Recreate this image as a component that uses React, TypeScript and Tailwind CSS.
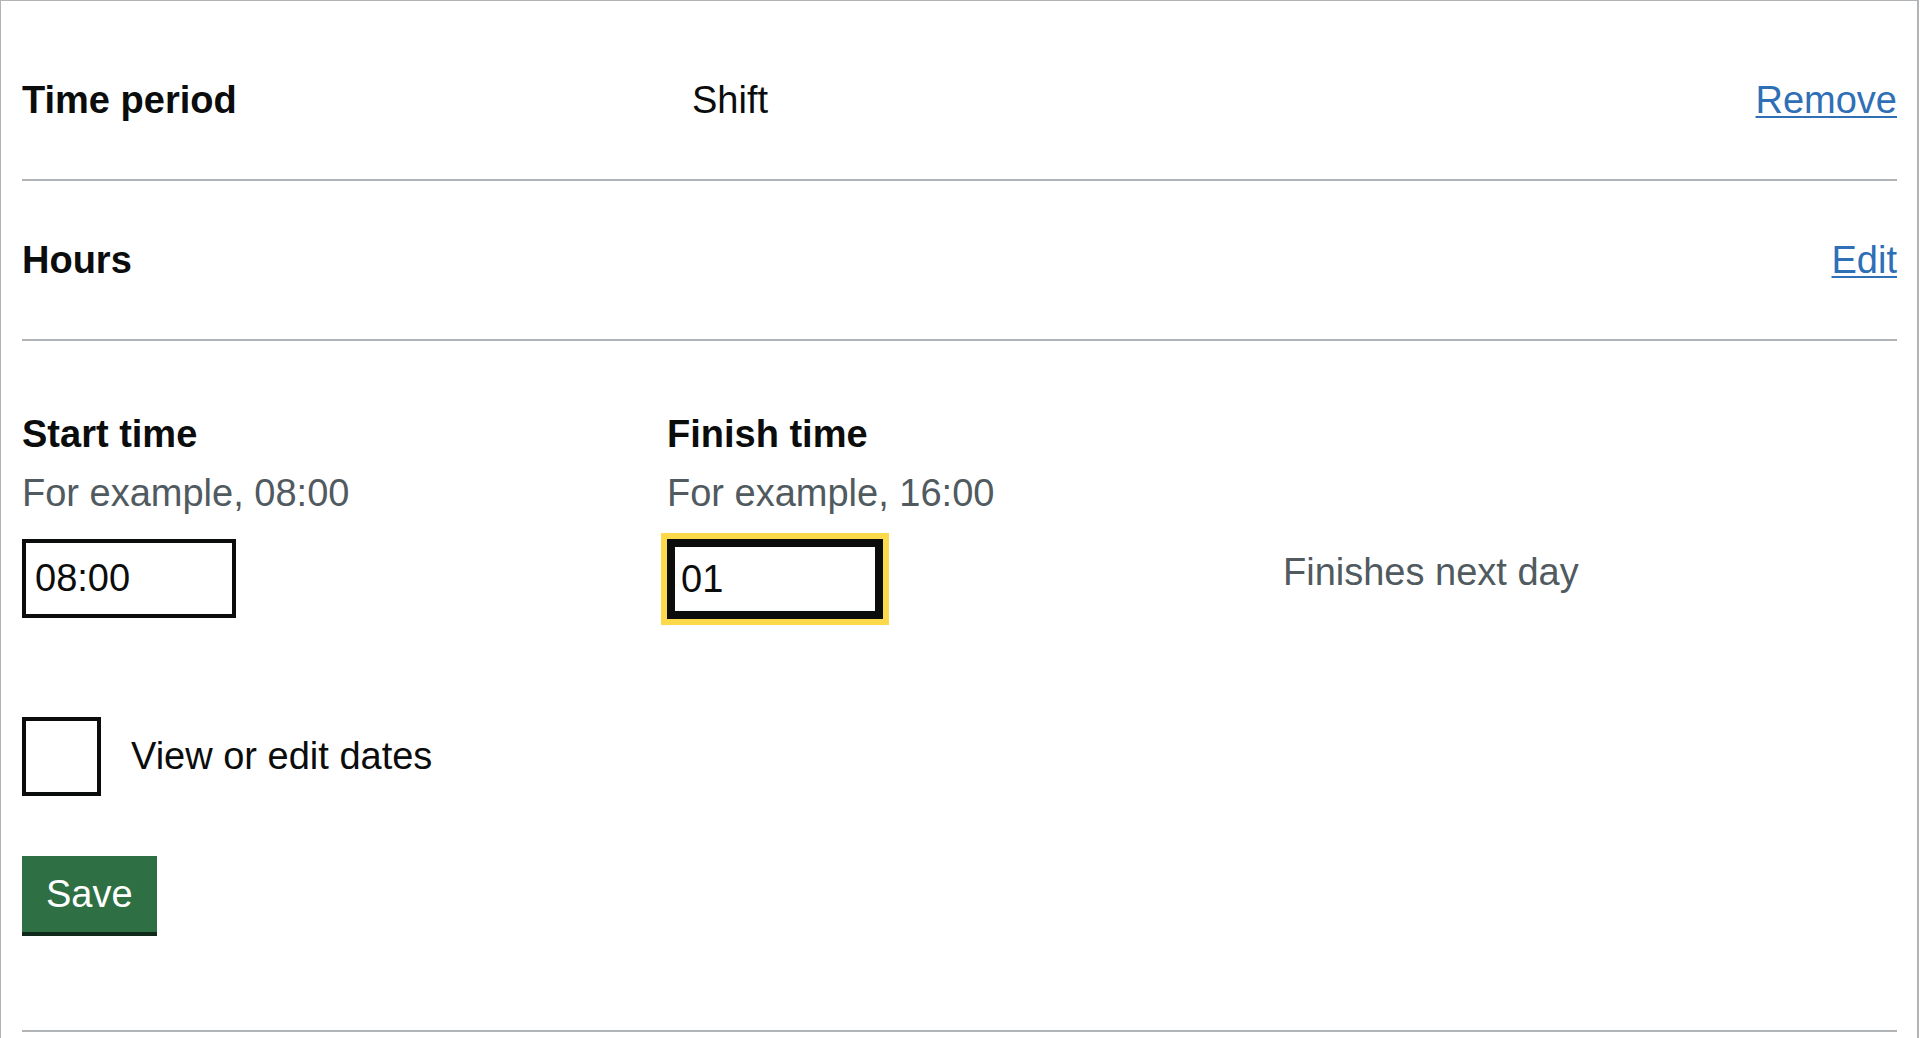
import React from 'react';

const SummaryRow = ({
  label,
  value,
  action,
  height,
}: {
  label: string;
  value?: string;
  action: string;
  height: string;
}) => {
  return (
    <div className={`flex items-center border-b-2 border-[#b1b4b6] ${height}`}>
      <dt className="w-[670px] shrink-0 text-[38px] font-bold">{label}</dt>
      <dd className="flex-1 text-[38px]">{value}</dd>
      <dd>
        <a
          href="#"
          className="text-[38px] text-[#2f6fb6] underline decoration-2 underline-offset-[3px]"
        >
          {action}
        </a>
      </dd>
    </div>
  );
};

const TimeField = ({
  id,
  label,
  hint,
  value,
  focused,
}: {
  id: string;
  label: string;
  hint: string;
  value: string;
  focused?: boolean;
}) => {
  return (
    <div>
      <label htmlFor={id} className="block text-[38px] leading-[50px] font-bold">
        {label}
      </label>
      <div className="mt-[9px] text-[38px] leading-[50px] text-[#505a5f]">{hint}</div>
      <input
        id={id}
        type="text"
        defaultValue={value}
        className={
          focused
            ? 'mt-[21px] block w-[216px] h-[80px] border-4 border-[#0b0c0c] bg-white px-[10px] text-[38px] text-[#0b0c0c] outline-none shadow-[inset_0_0_0_4px_#0b0c0c,0_0_0_6px_#fbd94a]'
            : 'mt-[21px] block w-[214px] h-[79px] border-4 border-[#0b0c0c] bg-white px-[9px] text-[38px] text-[#0b0c0c] outline-none'
        }
      />
    </div>
  );
};

const App = () => {
  return (
    <div className="min-h-screen bg-white font-['Liberation_Sans',Arial,sans-serif] text-[#0b0c0c]">
      <div className="w-[1919px] min-h-[1038px] border-l border-t border-r-2 border-[#b1b4b6] pl-[21px] pr-[20px] pt-[20px]">
        <dl>
          <SummaryRow label="Time period" value="Shift" action="Remove" height="h-[160px]" />
          <SummaryRow label="Hours" action="Edit" height="h-[160px]" />
        </dl>

        <form className="pt-[68px] pb-[98px] border-b-2 border-[#b1b4b6]">
          <div className="flex">
            <div className="w-[645px] shrink-0">
              <TimeField id="start" label="Start time" hint="For example, 08:00" value="08:00" />
            </div>
            <div className="w-[616px] shrink-0">
              <TimeField id="finish" label="Finish time" hint="For example, 16:00" value="01" focused />
            </div>
            <div className="pt-[138px] text-[38px] leading-[50px] text-[#505a5f]">Finishes next day</div>
          </div>

          <div className="mt-[98px] flex items-center gap-[30px]">
            <div className="w-[79px] h-[79px] border-4 border-[#0b0c0c] bg-white" />
            <span className="text-[38px]">View or edit dates</span>
          </div>

          <button
            type="button"
            className="mt-[60px] h-[76px] px-[24px] bg-[#2f6f44] text-white text-[38px] shadow-[0_4px_0_#11291a]"
          >
            Save
          </button>
        </form>
      </div>
    </div>
  );
};

export default App;
